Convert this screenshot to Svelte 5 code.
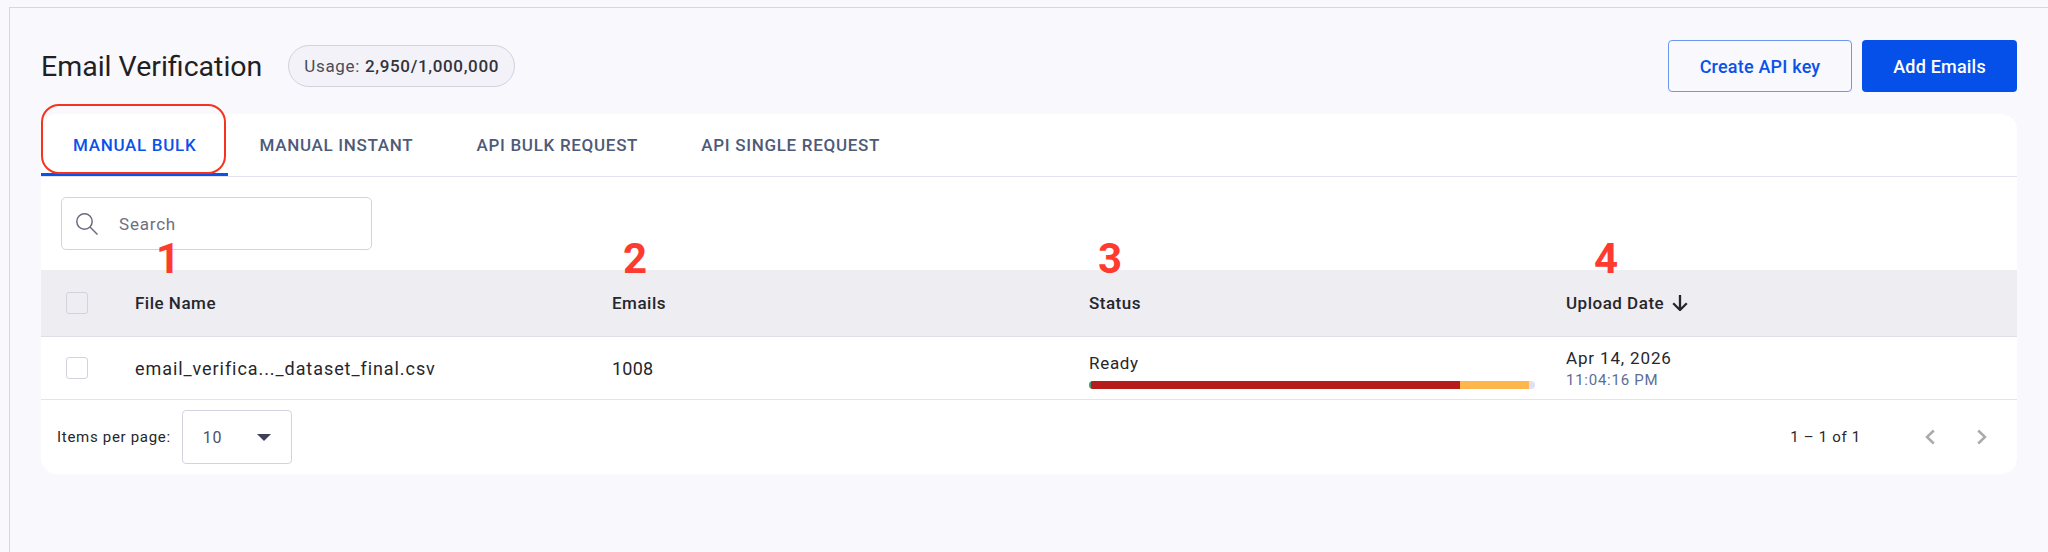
<script>
  const tabs = ['MANUAL BULK', 'MANUAL INSTANT', 'API BULK REQUEST', 'API SINGLE REQUEST'];
  const marks = [
    { n: 1, x: 168 },
    { n: 2, x: 635 },
    { n: 3, x: 1110 },
    { n: 4, x: 1606 }
  ];
  const bar = [
    { color: '#3f9a6b', width: 0.5 },
    { color: '#b71c1c', width: 82.6 },
    { color: '#ffb74d', width: 15.6 }
  ];
</script>

<div class="page">
  <div class="shell">
    <header class="top">
      <div class="heading">
        <h1>Email Verification</h1>
        <span class="usage">Usage: <b>2,950/1,000,000</b></span>
      </div>
      <div class="actions">
        <button class="btn outline">Create API key</button>
        <button class="btn solid">Add Emails</button>
      </div>
    </header>

    <section class="card">
      <nav class="tabs">
        {#each tabs as tab, i}
          <div class="tab" class:active={i === 0}>{tab}</div>
        {/each}
      </nav>

      <div class="search-row">
        <div class="search">
          <svg width="22" height="22" viewBox="0 0 22 22" fill="none" stroke="#6a6c80" stroke-width="1.5">
            <circle cx="8.500" cy="8.500" r="7.700" />
            <path d="M14 14l7.500 7.500" />
          </svg>
          <span>Search</span>
        </div>
      </div>

      <div class="grid head">
        <div class="cell"><span class="check"></span></div>
        <div class="cell">File Name</div>
        <div class="cell">Emails</div>
        <div class="cell">Status</div>
        <div class="cell">
          Upload Date
          <svg class="sort" width="16" height="16" viewBox="0 0 16 16" fill="none" stroke="#26262c" stroke-width="2.300">
            <path d="M8 0v14.500M1.200 8.300L8 15l6.800-6.700" />
          </svg>
        </div>
      </div>

      <div class="grid row">
        <div class="cell"><span class="check white"></span></div>
        <div class="cell name">email_verifica..._dataset_final.csv</div>
        <div class="cell count">1008</div>
        <div class="cell status">
          <span>Ready</span>
          <div class="bar">
            {#each bar as seg}
              <i style="width: {seg.width}%; background: {seg.color};"></i>
            {/each}
          </div>
        </div>
        <div class="cell date">
          <span>Apr 14, 2026</span>
          <small>11:04:16 PM</small>
        </div>
      </div>

      <footer class="pager">
        <div class="per-page">
          <span>Items per page:</span>
          <div class="select">
            <span>10</span>
            <i class="caret"></i>
          </div>
        </div>
        <div class="range">
          <span>1 – 1 of 1</span>
          <div class="arrows">
            <svg width="14" height="18" viewBox="0 0 14 18" fill="none" stroke="#ababab" stroke-width="2.500">
              <path d="M10.800 2.500L4 9l6.800 6.500" />
            </svg>
            <svg width="14" height="18" viewBox="0 0 14 18" fill="none" stroke="#ababab" stroke-width="2.500">
              <path d="M3.200 2.500L10 9l-6.800 6.500" />
            </svg>
          </div>
        </div>
      </footer>
    </section>
  </div>

  <!-- red annotations drawn over the screenshot -->
  <div class="callout"></div>
  {#each marks as m}
    <span class="mark" style="left: {m.x}px;">{m.n}</span>
  {/each}
</div>

<style>
  :global(body) {
    margin: 0;
    background: #f9f8fd;
  }

  .page {
    position: relative;
    height: 552px;
    padding-top: 7px;
    box-sizing: border-box;
    overflow: hidden;
    font-family: Roboto, "Liberation Sans", sans-serif;
    color: #26262c;
  }

  .shell {
    margin-left: 9px;
    height: 545px;
    box-sizing: border-box;
    padding: 32px 31px 0 31px;
    border-top: 1px solid #d8d6e2;
    border-left: 1px solid #d8d6e2;
  }

  .top {
    display: flex;
    justify-content: space-between;
    align-items: center;
    height: 52px;
  }

  .heading {
    display: flex;
    align-items: center;
    gap: 26px;
  }

  h1 {
    margin: 0;
    font-size: 28.500px;
    font-weight: 400;
    color: #1f1f24;
  }

  .usage {
    display: flex;
    align-items: center;
    gap: 5px;
    height: 42px;
    padding: 0 15px;
    box-sizing: border-box;
    font-size: 17px;
    letter-spacing: 0.65px;
    color: #4c4c58;
    background: #f3f2f8;
    border: 1px solid #d3d2df;
    border-radius: 21px;
  }

  .usage b {
    font-weight: 500;
    color: #33333b;
  }

  .actions {
    display: flex;
    gap: 10px;
  }

  .btn {
    height: 52px;
    border-radius: 4px;
    font-family: inherit;
    font-size: 18px;
    font-weight: 500;
    letter-spacing: 0.2px;
  }

  .outline {
    width: 184px;
    color: #0b52e8;
    background: transparent;
    border: 1px solid #6e97f0;
  }

  .solid {
    width: 155px;
    color: #fff;
    background: #0450e8;
    border: 0;
  }

  .card {
    margin-top: 22px;
    background: #fff;
    border-radius: 16px;
    overflow: hidden;
  }

  .tabs {
    display: flex;
    height: 62px;
    border-bottom: 1px solid #e4e3f2;
  }

  .tab {
    display: flex;
    align-items: center;
    justify-content: center;
    padding: 0 31px 0 32px;
    font-size: 17px;
    font-weight: 500;
    letter-spacing: 0.7px;
    color: #4d5b78;
  }

  .tab.active {
    padding-right: 32px;
    margin-right: -1px;
    color: #0b52e8;
    box-shadow: inset 0 -3px 0 #0b52e8;
  }

  .search-row {
    height: 93px;
    padding: 20px 0 0 20px;
    box-sizing: border-box;
  }

  .search {
    display: flex;
    align-items: center;
    gap: 21px;
    width: 311px;
    height: 53px;
    padding: 0 14px;
    box-sizing: border-box;
    border: 1px solid #d3d2df;
    border-radius: 5px;
    font-size: 17px;
    letter-spacing: 0.8px;
    color: #6d6f80;
  }

  .grid {
    display: grid;
    grid-template-columns: 94px 477px 477px 477px 1fr;
    box-sizing: border-box;
  }

  .cell {
    display: flex;
    align-items: center;
    font-size: 17px;
    letter-spacing: 0.7px;
  }

  .cell.name {
    font-size: 18px;
    letter-spacing: 0.93px;
  }

  .cell.count {
    font-size: 18px;
    letter-spacing: 0.2px;
  }

  .head {
    height: 67px;
    background: #eeedf2;
    border-bottom: 1px solid #dfdee8;
  }

  .head .cell {
    font-weight: 500;
    letter-spacing: 0.5px;
  }

  .row {
    height: 63px;
    border-bottom: 1px solid #e4e3f2;
  }

  .check {
    width: 22px;
    height: 22px;
    margin-left: 25px;
    box-sizing: border-box;
    border: 1px solid #d3d2df;
    border-radius: 3px;
  }

  .check.white {
    background: #fff;
  }

  .sort {
    margin-left: 8px;
  }

  .status,
  .date {
    flex-direction: column;
    align-items: flex-start;
  }

  .status {
    justify-content: flex-end;
    padding-bottom: 10px;
    gap: 9px;
    line-height: 18px;
  }

  .bar {
    display: flex;
    width: 446px;
    height: 8px;
    border-radius: 4px;
    overflow: hidden;
    background: #e0e0f5;
  }

  .bar i {
    display: block;
  }

  .date {
    justify-content: center;
    gap: 3px;
    letter-spacing: 0.85px;
  }

  .date small {
    font-size: 15px;
    letter-spacing: 0.75px;
    color: #5d6d96;
  }

  .pager {
    display: flex;
    justify-content: space-between;
    align-items: center;
    height: 74px;
    padding: 0 28px 0 16px;
    font-size: 15px;
    letter-spacing: 0.7px;
  }

  .per-page {
    display: flex;
    align-items: center;
    gap: 11px;
  }

  .select {
    display: flex;
    justify-content: space-between;
    align-items: center;
    width: 110px;
    height: 54px;
    padding: 0 20px;
    box-sizing: border-box;
    border: 1px solid #d3d2df;
    border-radius: 4px;
    font-size: 16px;
    color: #4d5168;
  }

  .caret {
    border-left: 7px solid transparent;
    border-right: 7px solid transparent;
    border-top: 7px solid #3d4058;
  }

  .range {
    display: flex;
    align-items: center;
    gap: 62px;
  }

  .arrows {
    display: flex;
    gap: 38px;
  }

  .callout {
    position: absolute;
    left: 41px;
    top: 104px;
    width: 185px;
    height: 70px;
    box-sizing: border-box;
    border: 2.500px solid #f5341f;
    border-radius: 18px;
  }

  .mark {
    position: absolute;
    top: 235px;
    transform: translateX(-50%);
    font-size: 42px;
    line-height: 48px;
    font-weight: 700;
    color: #ff3b30;
  }
</style>
